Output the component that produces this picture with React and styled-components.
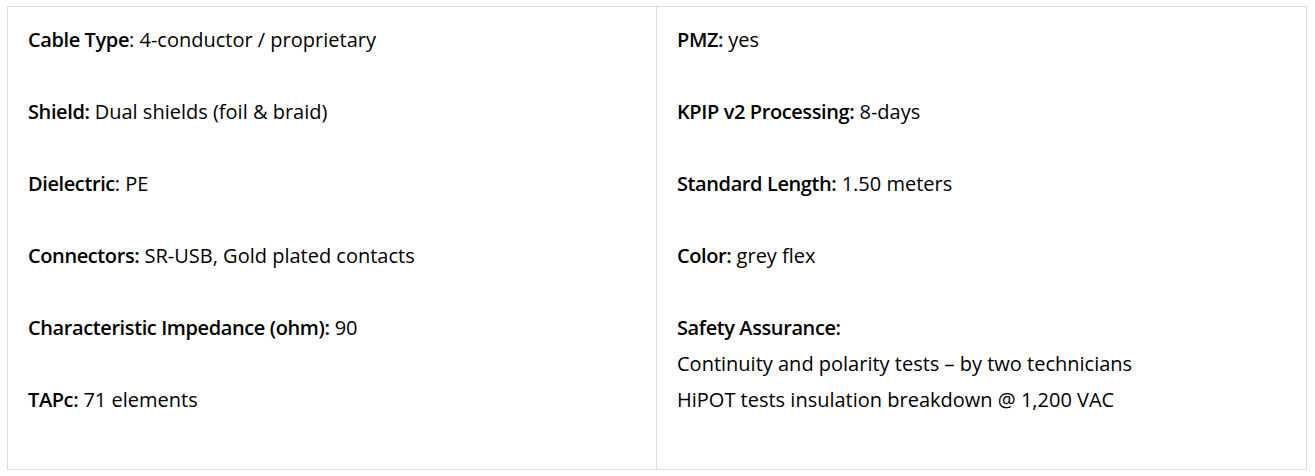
import styled, { createGlobalStyle } from 'styled-components';

const GlobalStyle = createGlobalStyle`
  body {
    margin: 0;
    background: #fff;
    font-family: "Open Sans", "Noto Sans", sans-serif;
  }
`;

const leftSpecs = [
  { label: 'Cable Type', value: '4-conductor / proprietary', colonPlain: true },
  { label: 'Shield:', value: 'Dual shields (foil & braid)' },
  { label: 'Dielectric', value: 'PE', colonPlain: true },
  { label: 'Connectors:', value: 'SR-USB, Gold plated contacts' },
  { label: 'Characteristic Impedance (ohm):', value: '90' },
  { label: 'TAPc:', value: '71 elements' },
];

const rightSpecs = [
  { label: 'PMZ:', value: 'yes' },
  { label: 'KPIP v2 Processing:', value: '8-days' },
  { label: 'Standard Length:', value: '1.50 meters' },
  { label: 'Color:', value: 'grey flex' },
];

function Spec({ label, value, colonPlain }) {
  return (
    <Para>
      <strong>{label}</strong>
      {colonPlain ? ':' : ''} {value}
    </Para>
  );
}

export default function App() {
  return (
    <>
      <GlobalStyle />
      <SpecTable>
        <Cell>
          {leftSpecs.map((s) => (
            <Spec key={s.label} {...s} />
          ))}
        </Cell>
        <Cell divider>
          {rightSpecs.map((s) => (
            <Spec key={s.label} {...s} />
          ))}
          <Para>
            <strong>Safety Assurance:</strong>
            <br />
            Continuity and polarity tests – by two technicians
            <br />
            HiPOT tests insulation breakdown @ 1,200 VAC
          </Para>
        </Cell>
      </SpecTable>
    </>
  );
}

const SpecTable = styled.div`
  display: grid;
  grid-template-columns: 648px 650px;
  width: 1300px;
  margin: 6px 0 0 7px;
  border: 1px solid #dddddd;
  box-sizing: border-box;
`;

const Cell = styled.div`
  padding: 15px 20px;
  border-left: ${(p) => (p.divider ? '1px solid #dddddd' : 'none')};
`;

const Para = styled.p`
  margin: 0 0 36px;
  font-size: 20px;
  line-height: 36px;
  color: #000;

  strong {
    font-weight: 600;
    letter-spacing: -0.4px;
  }
`;
